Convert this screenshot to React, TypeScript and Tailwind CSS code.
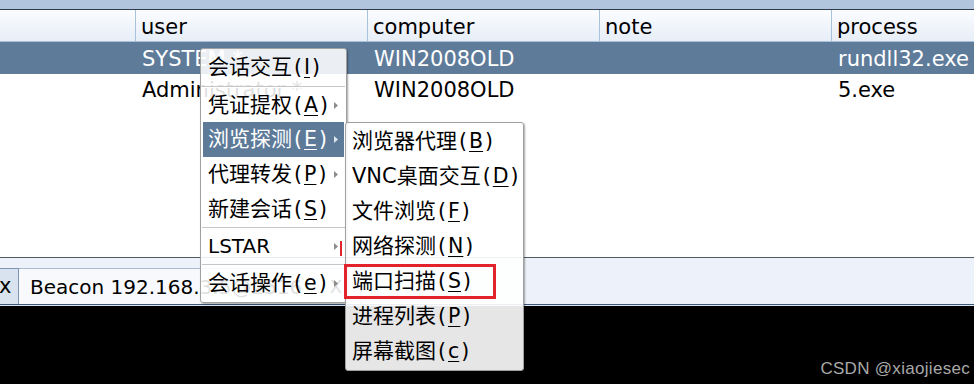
import React from "react";

const FONT = { fontFamily: '"DejaVu Sans", "Noto Sans CJK SC", sans-serif' };

function U({ c }: { c: string }) {
  return <span className="underline decoration-1 underline-offset-[3px]">{c}</span>;
}

function Arrow({ light }: { light?: boolean }) {
  return (
    <svg width="4" height="7" viewBox="0 0 4 7" className="shrink-0">
      <path d="M0 0 L4 3.5 L0 7 Z" fill={light ? "#dfe7f0" : "#8c8c8c"} />
    </svg>
  );
}

type Item =
  | { sep: true }
  | { sep?: false; label: string; k?: string; h: number; arrow?: boolean; active?: boolean };

const menu1: Item[] = [
  { label: "会话交互", k: "I", h: 35 },
  { sep: true },
  { label: "凭证提权", k: "A", h: 34, arrow: true },
  { label: "浏览探测", k: "E", h: 35, arrow: true, active: true },
  { label: "代理转发", k: "P", h: 35, arrow: true },
  { label: "新建会话", k: "S", h: 34 },
  { sep: true },
  { label: "LSTAR", h: 34, arrow: true },
  { sep: true },
  { label: "会话操作", k: "e", h: 35, arrow: true },
];

const menu2: { label: string; k: string }[] = [
  { label: "浏览器代理", k: "B" },
  { label: "VNC桌面交互", k: "D" },
  { label: "文件浏览", k: "F" },
  { label: "网络探测", k: "N" },
  { label: "端口扫描", k: "S" },
  { label: "进程列表", k: "P" },
  { label: "屏幕截图", k: "c" },
];

function Label({ label, k }: { label: string; k?: string }) {
  const latinOnly = /^[A-Za-z ]+$/.test(label);
  return (
    <span className="whitespace-nowrap">
      <span className={latinOnly ? "text-[20px]" : "text-[21px]"}>{label}</span>
      {k ? (
        <span className="text-[20.5px]">
          <span className="mx-[2px]">(</span>
          <U c={k} />
          <span className="mx-[2px]">)</span>
        </span>
      ) : null}
    </span>
  );
}

export default function App() {
  return (
    <div className="relative w-[974px] h-[384px] overflow-hidden bg-white text-black" style={FONT}>
      {/* top strip */}
      <div className="h-[9px] bg-[#b1c6dd]" />
      <div className="h-px bg-[#2f3b4b]" />
      {/* header */}
      <div className="flex h-[32px] border-b border-[#a9c2dc] bg-gradient-to-b from-[#fbfcff] to-[#e7eef7] text-[21px] leading-none">
        <div className="w-[136px] shrink-0 border-r border-[#a9c2dc]" />
        {["user", "computer", "note", "process"].map((h, i) => (
          <div
            key={h}
            className={`w-[232px] shrink-0 flex items-center pl-[5px] pt-[3px] ${i < 3 ? "border-r border-[#a9c2dc]" : ""}`}
          >
            {h}
          </div>
        ))}
      </div>
      {/* rows */}
      <div className="flex h-[32px] bg-[#5e7b9a] text-white text-[21px] leading-none">
        <div className="w-[137px] shrink-0" />
        <div className="w-[232px] shrink-0 flex items-center pl-[5px] pt-[2px]">SYSTEM *</div>
        <div className="w-[232px] shrink-0 flex items-center pl-[5px] pt-[2px]">WIN2008OLD</div>
        <div className="w-[232px] shrink-0" />
        <div className="w-[140px] shrink-0 flex items-center pl-[5px] pt-[2px]">rundll32.exe</div>
      </div>
      <div className="flex h-[32px] text-[21px] leading-none">
        <div className="w-[137px] shrink-0" />
        <div className="w-[232px] shrink-0 flex items-center pl-[5px] pt-[1px]">Administrator *</div>
        <div className="w-[232px] shrink-0 flex items-center pl-[5px] pt-[1px]">WIN2008OLD</div>
        <div className="w-[232px] shrink-0" />
        <div className="w-[140px] shrink-0 flex items-center pl-[5px] pt-[1px]">5.exe</div>
      </div>
      <div className="h-[151px]" />
      <div className="h-px bg-[#505860]" />
      {/* tab bar */}
      <div className="h-[46px] bg-[#edf1f9] flex items-end pt-[10px]">
        <div className="w-[19px] h-[36px] shrink-0 border-t border-r border-[#7d95b2] bg-[#d9e3ef] flex items-center overflow-hidden text-[21px] leading-none">
          <span className="-ml-[1px]">x</span>
        </div>
        <div className="w-[342px] h-[36px] shrink-0 border-t border-r border-[#a9bbd0] bg-[#f7f9fc] flex items-center pl-[11px] text-[20px] leading-none whitespace-nowrap">
          <span>Beacon 192.168.3.5@2516</span>
          <span className="ml-auto mr-[18px] text-[18px]">X</span>
        </div>
      </div>
      <div className="h-px bg-[#3b5878]" />
      <div className="h-px bg-[#dfe5ee]" />
      {/* console */}
      <div className="h-[78px] bg-black flex items-end justify-end pr-[4px] pb-[7px]">
        <span
          className="text-[17px] leading-none text-[#a9a9a9] tracking-[0.3px]"
          style={{ fontFamily: '"Liberation Sans", Arial, sans-serif' }}
        >
          CSDN @xiaojiesec
        </span>
      </div>

      {/* context menu */}
      <div className="absolute left-[200px] top-[48px] w-[147px] rounded-[3px] border border-[#a0a0a0] bg-white/[0.88] shadow-[1px_1px_2px_rgba(0,0,0,0.35)] p-[1px] leading-none">
        {menu1.map((it, i) =>
          it.sep ? (
            <div key={i} className="h-[3px] flex flex-col justify-center">
              <div className="h-px bg-[#c6c6c6]" />
              <div className="h-px bg-white" />
            </div>
          ) : (
            <div
              key={i}
              style={{ height: it.h }}
              className={`flex items-center pl-[5px] pr-[6px] mx-[1px] ${it.active ? "bg-[#5d7a99] text-white" : ""}`}
            >
              <Label label={it.label} k={it.k} />
              <span className="ml-auto">{it.arrow ? <Arrow light={it.active} /> : null}</span>
            </div>
          )
        )}
      </div>

      {/* submenu */}
      <div className="absolute left-[345px] top-[122px] w-[179px] rounded-[3px] border border-[#a0a0a0] bg-white/[0.9] shadow-[1px_1px_2px_rgba(0,0,0,0.35)] p-[1px] leading-none">
        {menu2.map((it) => (
          <div key={it.label} className="h-[35px] flex items-center pl-[5px]">
            <Label label={it.label} k={it.k} />
          </div>
        ))}
      </div>

      {/* red annotations */}
      <div className="absolute left-[344px] top-[264px] w-[152px] h-[35px] border-[3px] border-[#e3232c]" />
      <div className="absolute left-[340px] top-[241px] w-[2px] h-[15px] bg-[#e3232c]" />
    </div>
  );
}
